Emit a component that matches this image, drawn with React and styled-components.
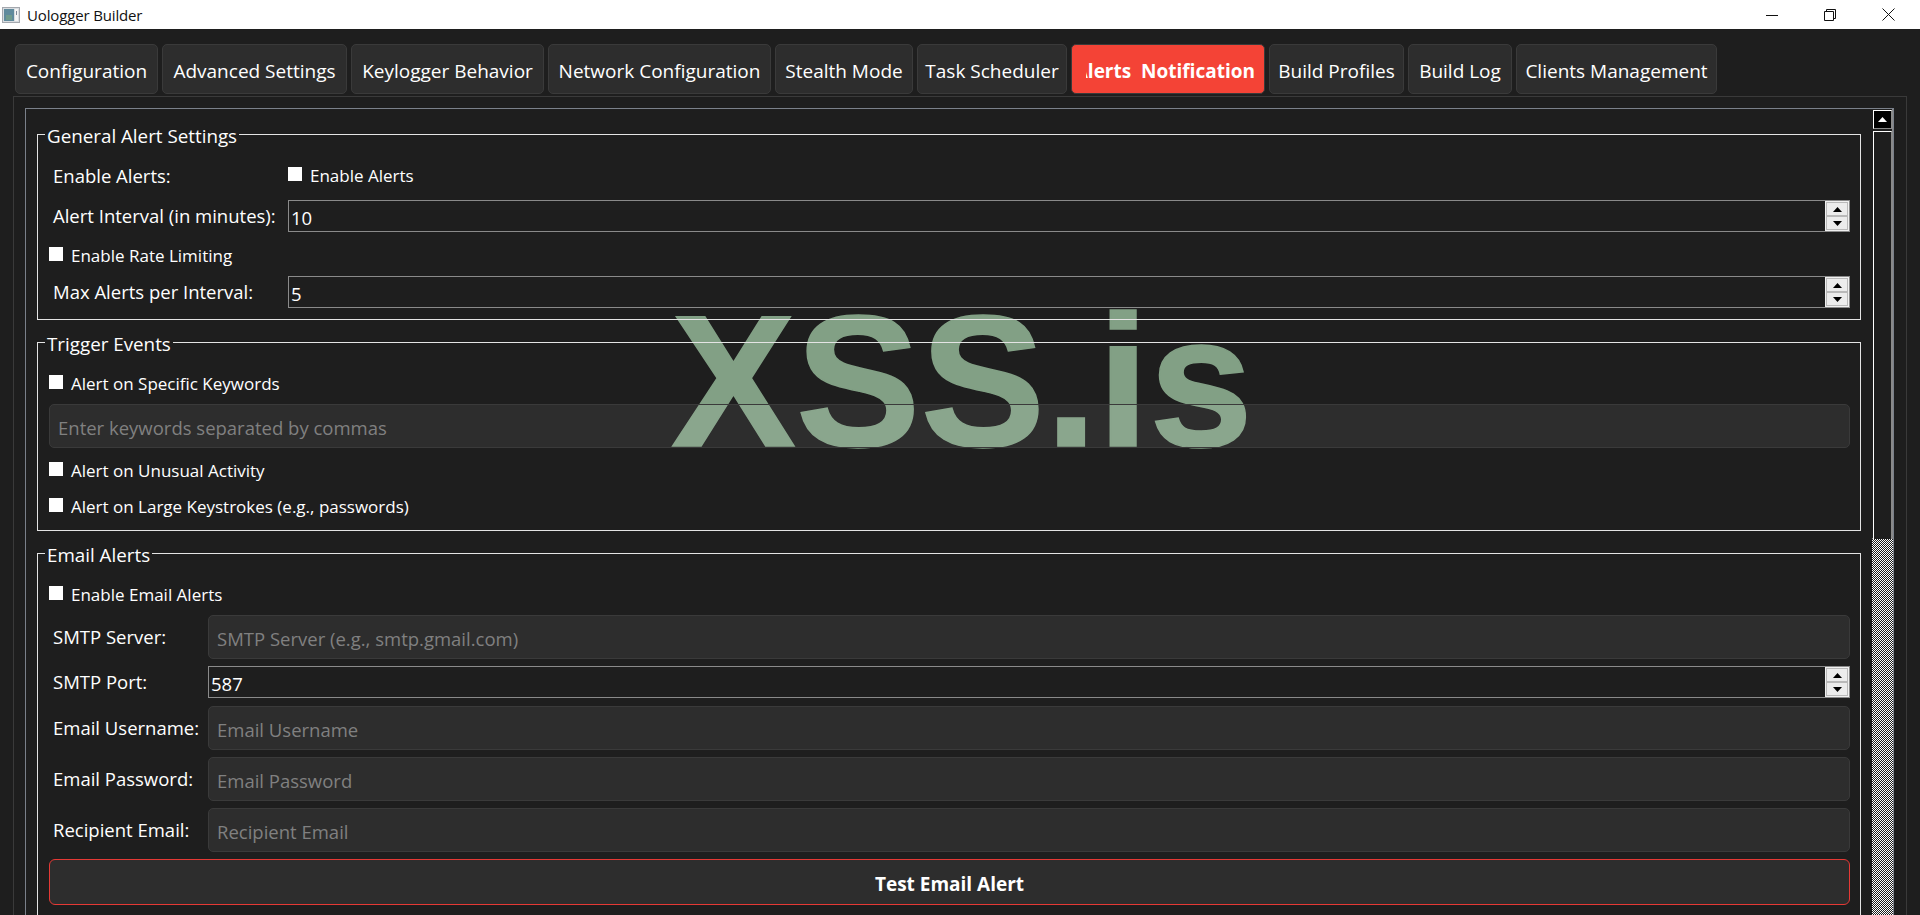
import styled, { createGlobalStyle } from "styled-components";

const GlobalStyle = createGlobalStyle`
  html, body { margin: 0; padding: 0; background: #1e1e1e; }
  * { box-sizing: border-box; }
`;

const UI_FONT = `"Open Sans", "Noto Sans", "Liberation Sans", sans-serif`;

const Window = styled.div`
  position: relative;
  height: 100vh;
  overflow: hidden;
  background: #1e1e1e;
  font-family: ${UI_FONT};
  color: #fff;
`;

const TitleBar = styled.div`
  height: 29px;
  background: #fff;
  display: flex;
  align-items: center;
  padding-left: 2px;
  color: #111;
`;

const TitleText = styled.span`
  margin-left: 7px;
  font-size: 15px;
  letter-spacing: -0.15px;
`;

const WindowControls = styled.div`
  margin-left: auto;
  display: flex;
  align-items: center;
  height: 100%;
  padding-right: 3px;
`;

const ControlButton = styled.div`
  width: 58px;
  height: 100%;
  display: flex;
  align-items: center;
  justify-content: center;
`;

const TabBar = styled.div`
  display: flex;
  gap: 4px;
  margin: 15px 0 0 15px;
`;

const Tab = styled.div`
  flex: none;
  width: ${({ $width }) => $width}px;
  height: 50px;
  display: flex;
  align-items: center;
  justify-content: center;
  padding: ${({ $active }) => ($active ? "3px 9px 0 14px" : "3px 8px 0")};
  border: 1px solid #3a3a3a;
  border-radius: 5px;
  background: ${({ $active }) => ($active ? "#f44336" : "#2d2d2d")};
  font-size: 19px;
  font-weight: ${({ $active }) => ($active ? 700 : 400)};
  white-space: pre;
`;

// the selected tab is too narrow for its label, Qt cuts the label on the left
const TabClip = styled.div`
  width: 100%;
  display: flex;
  justify-content: ${({ $active }) => ($active ? "flex-end" : "center")};
  overflow: ${({ $active }) => ($active ? "hidden" : "visible")};
`;

const TabLabel = styled.span`
  flex: none;
`;

const Pane = styled.div`
  position: relative;
  z-index: 1;
  margin: 2px 13px 0 13px;
  padding: 11px 12px 0 11px;
  height: 830px;
  border: 1px solid #3a3a3a;
  border-bottom: 0;
`;

const ScrollArea = styled.div`
  display: flex;
  height: 100%;
  border: 1px solid #7a808a;
  border-bottom: 0;
`;

const Content = styled.div`
  flex: 1;
  min-width: 0;
  padding: 12px 11px 0 11px;
`;

const Group = styled.fieldset`
  margin: ${({ $first }) => ($first ? "0" : "9px 0 0")};
  padding: 0 10px ${({ $bottom }) => $bottom}px 11px;
  min-width: 0;
  border: 1px solid #e4e4e4;
  display: block;
`;

const GroupTitle = styled.legend`
  margin-left: -4px;
  padding: 4px 2px 0;
  height: 26px;
  line-height: 22px;
  font-size: 18.8px;
`;

const CheckRow = styled.label`
  display: flex;
  align-items: center;
  gap: 8px;
  height: 28px;
  margin-top: ${({ $top }) => $top || 0}px;
  font-size: 17px;
`;

const InlineCheckRow = styled(CheckRow)`
  align-self: start;
`;

const CheckBox = styled.input.attrs({ type: "checkbox" })`
  appearance: none;
  flex: none;
  width: 14px;
  height: 14px;
  margin: 0;
  background: #fff;
`;

const CheckText = styled.span`
  padding-top: 3px;
`;

const FormRow = styled.div`
  display: grid;
  grid-template-columns: ${({ $labelWidth }) => $labelWidth}px 1fr;
  align-items: center;
  min-height: 32px;
  margin-top: ${({ $top }) => $top}px;
`;

const FieldLabel = styled.span`
  padding: 0 0 2px 4px;
  font-size: 18.5px;
  white-space: nowrap;
`;

const TextField = styled.input`
  display: block;
  width: 100%;
  height: 44px;
  margin-top: ${({ $top }) => $top || 0}px;
  padding: 3px 8px 0;
  background: rgba(255, 255, 255, 0.067);
  border: 1px solid #3a3a3a;
  border-radius: 5px;
  outline: none;
  color: #fff;
  font-family: ${UI_FONT};
  font-size: 18.5px;

  &::placeholder {
    color: #808080;
    opacity: 1;
  }
`;

const SpinBox = styled.div`
  display: flex;
  height: 32px;
  border: 1px solid #8a8a8a;
`;

const SpinValue = styled.span`
  flex: 1;
  padding-left: 2px;
  font-size: 18.5px;
  line-height: 33px;
`;

const SpinButtons = styled.div`
  width: 24px;
  display: flex;
  flex-direction: column;
  padding: 1px;
  background: #f0f0f0;
`;

const SpinButton = styled.div`
  flex: 1;
  display: flex;
  align-items: center;
  justify-content: center;
  border: 1px solid #b9b9b9;
  background: #ececec;
`;

const PrimaryButton = styled.div`
  height: 46px;
  margin-top: 7px;
  padding-top: 3px;
  display: flex;
  align-items: center;
  justify-content: center;
  background: rgba(255, 255, 255, 0.067);
  border: 1px solid #e53935;
  border-radius: 6px;
  font-size: 19px;
  font-weight: 700;
`;

const ScrollBar = styled.div`
  flex: none;
  width: 21px;
  display: flex;
  flex-direction: column;
  background: repeating-conic-gradient(#fff 0 25%, #1e1e1e 0 50%) 0 0 / 2px 2px;
`;

const ScrollTop = styled.div`
  height: 430px;
  padding: 1px 0 0 1px;
  background: #1e1e1e;
  border-right: 1px solid #8a8a8a;
  border-bottom: 1px solid #8a8a8a;
`;

const ScrollUp = styled.div`
  height: 19px;
  display: flex;
  align-items: center;
  justify-content: center;
  background: #000;
  border: 1px solid #fff;
  border-right-color: #8a8a8a;
  border-bottom-color: #8a8a8a;
`;

const ScrollHandle = styled.div`
  height: 408px;
  margin-top: 2px;
  background: #1e1e1e;
  border: 1px solid #fff;
  border-right-color: #8a8a8a;
  border-bottom: 0;
`;

// sits under the panels: the group borders run across the letters
const Watermark = styled.div`
  position: absolute;
  z-index: 0;
  left: 671px;
  top: 274px;
  font-family: "Liberation Sans", Arial, sans-serif;
  font-size: 187px;
  line-height: 215px;
  font-weight: 700;
  color: #82a085;
  -webkit-text-stroke: 1.5px #82a085;
  pointer-events: none;
`;

function Triangle({ up, color = "#000" }) {
  return (
    <svg width="9" height="5" viewBox="0 0 9 5">
      <path d={up ? "M4.5 0L9 5H0Z" : "M0 0H9L4.5 5Z"} fill={color} />
    </svg>
  );
}

function Spin({ value }) {
  return (
    <SpinBox>
      <SpinValue>{value}</SpinValue>
      <SpinButtons>
        <SpinButton>
          <Triangle up />
        </SpinButton>
        <SpinButton>
          <Triangle />
        </SpinButton>
      </SpinButtons>
    </SpinBox>
  );
}

function Check({ children, top }) {
  return (
    <CheckRow $top={top}>
      <CheckBox />
      <CheckText>{children}</CheckText>
    </CheckRow>
  );
}

const tabs = [
  ["Configuration", 143],
  ["Advanced Settings", 185],
  ["Keylogger Behavior", 193],
  ["Network Configuration", 223],
  ["Stealth Mode", 138],
  ["Task Scheduler", 150],
  ["Alerts  Notification", 194, true],
  ["Build Profiles", 135],
  ["Build Log", 104],
  ["Clients Management", 201],
];

const emailFields = [
  ["Email Username:", "Email Username", 8],
  ["Email Password:", "Email Password", 7],
  ["Recipient Email:", "Recipient Email", 7],
];

function App() {
  return (
    <Window>
      <GlobalStyle />
      <TitleBar>
        <svg width="18" height="16" viewBox="0 0 18 16">
          <rect x="0.5" y="0.5" width="17" height="15" fill="#d8dce0" stroke="#a4a8ae" />
          <rect x="2" y="2" width="10" height="12" fill="#5f8a9c" />
          <rect x="4" y="8" width="6" height="5" fill="#6f9a8c" />
          <rect x="13" y="2" width="3" height="12" fill="#f4f4f4" />
          <rect x="14" y="4" width="1" height="4" fill="#7f8a99" />
        </svg>
        <TitleText>Uologger Builder</TitleText>
        <WindowControls>
          <ControlButton>
            <svg width="12" height="12" viewBox="0 0 12 12">
              <path d="M0 6.5H12" stroke="#111" />
            </svg>
          </ControlButton>
          <ControlButton>
            <svg width="12" height="12" viewBox="0 0 12 12" fill="none">
              <path d="M0.5 2.5H9.5V11.5H0.5Z M2.5 2.5V0.5H11.5V9.5H9.5" stroke="#111" />
            </svg>
          </ControlButton>
          <ControlButton>
            <svg width="13" height="13" viewBox="0 0 13 13">
              <path d="M0.5 0.5L12.5 12.5M12.5 0.5L0.5 12.5" stroke="#111" />
            </svg>
          </ControlButton>
        </WindowControls>
      </TitleBar>

      <TabBar>
        {tabs.map(([label, width, active]) => (
          <Tab key={label} $width={width} $active={active}>
            <TabClip $active={active}>
              <TabLabel>{label}</TabLabel>
            </TabClip>
          </Tab>
        ))}
      </TabBar>

      <Watermark>XSS.is</Watermark>

      <Pane>
        <ScrollArea>
          <Content>
            <Group $first $bottom={11}>
              <GroupTitle>General Alert Settings</GroupTitle>
              <FormRow $labelWidth={239} $top={13}>
                <FieldLabel>Enable Alerts:</FieldLabel>
                <InlineCheckRow>
                  <CheckBox />
                  <CheckText>Enable Alerts</CheckText>
                </InlineCheckRow>
              </FormRow>
              <FormRow $labelWidth={239} $top={8}>
                <FieldLabel>Alert Interval (in minutes):</FieldLabel>
                <Spin value="10" />
              </FormRow>
              <Check top={8}>Enable Rate Limiting</Check>
              <FormRow $labelWidth={239} $top={8}>
                <FieldLabel>Max Alerts per Interval:</FieldLabel>
                <Spin value="5" />
              </FormRow>
            </Group>

            <Group $bottom={11}>
              <GroupTitle>Trigger Events</GroupTitle>
              <Check top={13}>Alert on Specific Keywords</Check>
              <TextField $top={8} readOnly placeholder="Enter keywords separated by commas" />
              <Check top={7}>Alert on Unusual Activity</Check>
              <Check top={8}>Alert on Large Keystrokes (e.g., passwords)</Check>
            </Group>

            <Group $bottom={20}>
              <GroupTitle>Email Alerts</GroupTitle>
              <Check top={13}>Enable Email Alerts</Check>
              <FormRow $labelWidth={159} $top={8}>
                <FieldLabel>SMTP Server:</FieldLabel>
                <TextField readOnly placeholder="SMTP Server (e.g., smtp.gmail.com)" />
              </FormRow>
              <FormRow $labelWidth={159} $top={7}>
                <FieldLabel>SMTP Port:</FieldLabel>
                <Spin value="587" />
              </FormRow>
              {emailFields.map(([label, placeholder, top]) => (
                <FormRow key={label} $labelWidth={159} $top={top}>
                  <FieldLabel>{label}</FieldLabel>
                  <TextField readOnly placeholder={placeholder} />
                </FormRow>
              ))}
              <PrimaryButton>Test Email Alert</PrimaryButton>
            </Group>
          </Content>

          <ScrollBar>
            <ScrollTop>
              <ScrollUp>
                <Triangle up color="#fff" />
              </ScrollUp>
              <ScrollHandle />
            </ScrollTop>
          </ScrollBar>
        </ScrollArea>
      </Pane>
    </Window>
  );
}

export default App;
